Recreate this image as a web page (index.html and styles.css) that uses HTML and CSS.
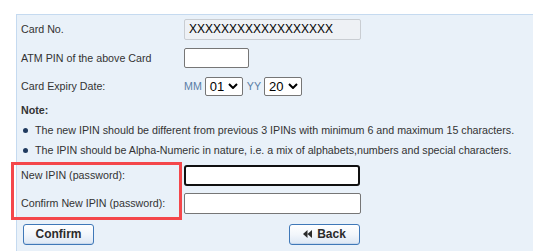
FILE: index.html
```html
<!DOCTYPE html>
<html>
<head>
<meta charset="utf-8">
<link rel="stylesheet" href="styles.css">
</head>
<body>
<div class="panel">
  <div class="row r1">
    <span class="label">Card No.</span>
    <div class="field card-no">XXXXXXXXXXXXXXXXXX</div>
  </div>
  <div class="row r2">
    <span class="label">ATM PIN of the above Card</span>
    <input class="field pin" type="text">
  </div>
  <div class="row r3">
    <span class="label">Card Expiry Date:</span>
    <div class="expiry">
      <span class="unit">MM</span>
      <span class="select">01<svg class="chev" viewBox="0 0 10 6" width="10" height="6"><path d="M1 1 L5 5 L9 1" fill="none" stroke="#000" stroke-width="2"/></svg></span>
      <span class="unit">YY</span>
      <span class="select">20<svg class="chev" viewBox="0 0 10 6" width="10" height="6"><path d="M1 1 L5 5 L9 1" fill="none" stroke="#000" stroke-width="2"/></svg></span>
    </div>
  </div>
  <div class="note">Note:</div>
  <ul class="bullets">
    <li>The new IPIN should be different from previous 3 IPINs with minimum 6 and maximum 15 characters.</li>
    <li>The IPIN should be Alpha-Numeric in nature, i.e. a mix of alphabets,numbers and special characters.</li>
  </ul>
  <div class="pw-group">
    <div class="row r4">
      <span class="label">New IPIN (password):</span>
      <div class="field pw focused"></div>
    </div>
    <div class="row r5">
      <span class="label">Confirm New IPIN (password):</span>
      <div class="field pw"></div>
    </div>
    <div class="highlight"></div>
  </div>
  <div class="actions">
    <button class="btn confirm">Confirm</button>
    <button class="btn back"><svg class="rew" viewBox="0 0 9 8" width="9" height="8"><path d="M4.5 0 L0 4 L4.5 8 Z M9 0 L4.5 4 L9 8 Z" fill="#2b2b2b"/></svg>Back</button>
  </div>
</div>
</body>
</html>
```

FILE: styles.css
```css
* { box-sizing: border-box; }
html, body { margin: 0; padding: 0; background: #fff; }
body {
  font-family: "Liberation Sans", Arial, sans-serif;
  font-size: 10.7px;
  color: #333;
  overflow: hidden;
}
.panel {
  margin: 14px 0 0 16px;
  width: 530px;
  background: #e9f1f9;
  border: 1px solid #c5daf0;
  border-right: none;
  padding: 0 0 3px 4px;
}
.row {
  display: flex;
  align-items: center;
}
.r1 { height: 29px; }
.r2 { height: 28px; }
.r3 { height: 28px; }
.r4 { height: 26px; margin-top: 2px; }
.r5 { height: 30px; }
.label {
  width: 163px;
  flex: none;
  line-height: 13px;
}
.field {
  flex: none;
  display: block;
  height: 20px;
  border: 1px solid #767676;
  background: #fff;
  border-radius: 2px;
  margin: 0;
  padding: 0;
}
.card-no {
  width: 177px;
  height: 21px;
  background: #eef1f5;
  border-color: #c9cdd2;
  color: #000;
  font-size: 12px;
  line-height: 19px;
  padding-left: 4px;
  font-family: "Liberation Sans", Arial, sans-serif;
}
.pin { width: 65px; }
.pw { width: 177px; height: 21px; }
.pw.focused { border: 2px solid #101010; border-radius: 3px; height: 21px; width: 176px; }
.expiry {
  display: flex;
  align-items: center;
  gap: 3px;
}
.unit {
  color: #5a7ea6;
  font-size: 10.7px;
}
.select {
  display: inline-flex;
  align-items: center;
  height: 19px;
  width: 38px;
  border: 1px solid #767676;
  border-radius: 2px;
  background: #fff;
  color: #000;
  font-size: 13px;
  padding-left: 4px;
  gap: 4px;
}
.expiry .select + .unit { margin-left: 1px; }
.chev { flex: none; }
.note {
  font-weight: bold;
  height: 20px;
  line-height: 20px;
}
.bullets {
  list-style: none;
  margin: 0;
  padding: 0;
}
.bullets li {
  position: relative;
  height: 20px;
  line-height: 20px;
  padding-left: 14px;
}
.bullets li::before {
  content: "";
  position: absolute;
  left: 2px;
  top: 8px;
  width: 5px;
  height: 5px;
  border-radius: 50%;
  background: #1f3a5f;
}
.pw-group { position: relative; }
.highlight {
  position: absolute;
  left: -10px;
  top: 0;
  width: 171px;
  height: 58px;
  border: 3px solid #f4474b;
  pointer-events: none;
}
.actions {
  display: flex;
  align-items: center;
  height: 30px;
  padding-top: 2px;
}
.btn {
  height: 21px;
  width: 71px;
  border: 1px solid #3f78b8;
  border-radius: 3px;
  background: linear-gradient(#ffffff 0%, #f2f6fb 50%, #dce7f4 100%);
  box-shadow: inset 0 -1px 0 #c8d8ec;
  font-family: "Liberation Sans", Arial, sans-serif;
  font-size: 12px;
  font-weight: bold;
  color: #2b2b2b;
  padding: 0;
  display: inline-flex;
  align-items: center;
  justify-content: center;
}
.confirm { margin-left: 2px; }
.back { margin-left: 195px; gap: 5px; }
.rew { flex: none; }
```
